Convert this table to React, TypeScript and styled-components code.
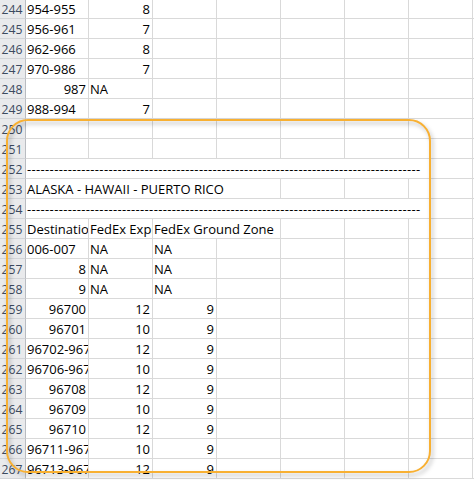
import React from "react";
import styled, { createGlobalStyle } from "styled-components";

const Global = createGlobalStyle`
  html, body { margin: 0; padding: 0; background: #ffffff; }
  body { width: 474px; height: 480px; overflow: hidden; }
`;

const Viewport = styled.div`
  position: relative;
  width: 474px;
  height: 480px;
  overflow: hidden;
  background: #ffffff;
  font-family: "Open Sans", "Liberation Sans", sans-serif;
  font-size: 13px;
  color: #000000;
`;

const Sheet = styled.div`
  display: flex;
  flex-direction: column;
  margin-top: -1px;
`;

const Row = styled.div`
  display: grid;
  grid-template-columns: 26px 63px 64px 64px 64px 64px 64px 64px 20px;
  height: 20px;
`;

const RowHeader = styled.div`
  box-sizing: border-box;
  height: 20px;
  background: #e9eaec;
  border-right: 1px solid #b9bcc1;
  border-bottom: 1px solid #d3d5d8;
  color: #3d4b60;
  font-size: 12.2px;
  text-align: center;
  line-height: 19px;
  padding-top: 1px;
  padding-right: 1px;
  overflow: hidden;
`;

const Cell = styled.div<{ $span?: number; $align?: "left" | "right" }>`
  box-sizing: border-box;
  height: 20px;
  grid-column: span ${(p) => p.$span ?? 1};
  border-right: 1px solid #d9d9d9;
  border-bottom: 1px solid #d9d9d9;
  text-align: ${(p) => p.$align ?? "left"};
  padding: 1px ${(p) => (p.$align === "right" ? "2px" : "0")} 0
    ${(p) => (p.$align === "right" ? "0" : "1px")};
  line-height: 19px;
  white-space: nowrap;
  overflow: hidden;
`;

const Dashes = styled.span`
  letter-spacing: 0.34px;
`;

const Callout = styled.div`
  position: absolute;
  left: 6px;
  top: 119px;
  width: 425px;
  height: 354px;
  box-sizing: border-box;
  border: 2.5px solid #f8b032;
  border-radius: 22px;
  filter: drop-shadow(2px 3px 2px rgba(0, 0, 0, 0.28));
  pointer-events: none;
`;

type C = { t?: string; r?: boolean; span?: number; dash?: boolean };

const DASH = "-".repeat(87);

const rows: { n: number; cells: C[] }[] = [
  { n: 244, cells: [{ t: "954-955" }, { t: "8", r: true }] },
  { n: 245, cells: [{ t: "956-961" }, { t: "7", r: true }] },
  { n: 246, cells: [{ t: "962-966" }, { t: "8", r: true }] },
  { n: 247, cells: [{ t: "970-986" }, { t: "7", r: true }] },
  { n: 248, cells: [{ t: "987", r: true }, { t: "NA" }] },
  { n: 249, cells: [{ t: "988-994" }, { t: "7", r: true }] },
  { n: 250, cells: [] },
  { n: 251, cells: [] },
  { n: 252, cells: [{ dash: true, span: 7 }] },
  { n: 253, cells: [{ t: "ALASKA - HAWAII - PUERTO RICO", span: 4 }] },
  { n: 254, cells: [{ dash: true, span: 7 }] },
  {
    n: 255,
    cells: [{ t: "Destination" }, { t: "FedEx Express Zone" }, { t: "FedEx Ground Zone", span: 2 }],
  },
  { n: 256, cells: [{ t: "006-007" }, { t: "NA" }, { t: "NA" }] },
  { n: 257, cells: [{ t: "8", r: true }, { t: "NA" }, { t: "NA" }] },
  { n: 258, cells: [{ t: "9", r: true }, { t: "NA" }, { t: "NA" }] },
  { n: 259, cells: [{ t: "96700", r: true }, { t: "12", r: true }, { t: "9", r: true }] },
  { n: 260, cells: [{ t: "96701", r: true }, { t: "10", r: true }, { t: "9", r: true }] },
  { n: 261, cells: [{ t: "96702-96701" }, { t: "12", r: true }, { t: "9", r: true }] },
  { n: 262, cells: [{ t: "96706-96707" }, { t: "10", r: true }, { t: "9", r: true }] },
  { n: 263, cells: [{ t: "96708", r: true }, { t: "12", r: true }, { t: "9", r: true }] },
  { n: 264, cells: [{ t: "96709", r: true }, { t: "10", r: true }, { t: "9", r: true }] },
  { n: 265, cells: [{ t: "96710", r: true }, { t: "12", r: true }, { t: "9", r: true }] },
  { n: 266, cells: [{ t: "96711-96712" }, { t: "10", r: true }, { t: "9", r: true }] },
  { n: 267, cells: [{ t: "96713-96714" }, { t: "12", r: true }, { t: "9", r: true }] },
];

const TOTAL_COLS = 8;

export default function App() {
  return (
    <Viewport>
      <Global />
      <Sheet>
        {rows.map((row) => {
          const used = row.cells.reduce((s, c) => s + (c.span ?? 1), 0);
          const fillers = Array.from({ length: TOTAL_COLS - used });
          return (
            <Row key={row.n}>
              <RowHeader>{row.n}</RowHeader>
              {row.cells.map((c, i) => (
                <Cell key={i} $span={c.span} $align={c.r ? "right" : "left"}>
                  {c.dash ? <Dashes>{DASH}</Dashes> : c.t}
                </Cell>
              ))}
              {fillers.map((_, i) => (
                <Cell key={`f${i}`} />
              ))}
            </Row>
          );
        })}
      </Sheet>
      <Callout />
    </Viewport>
  );
}
